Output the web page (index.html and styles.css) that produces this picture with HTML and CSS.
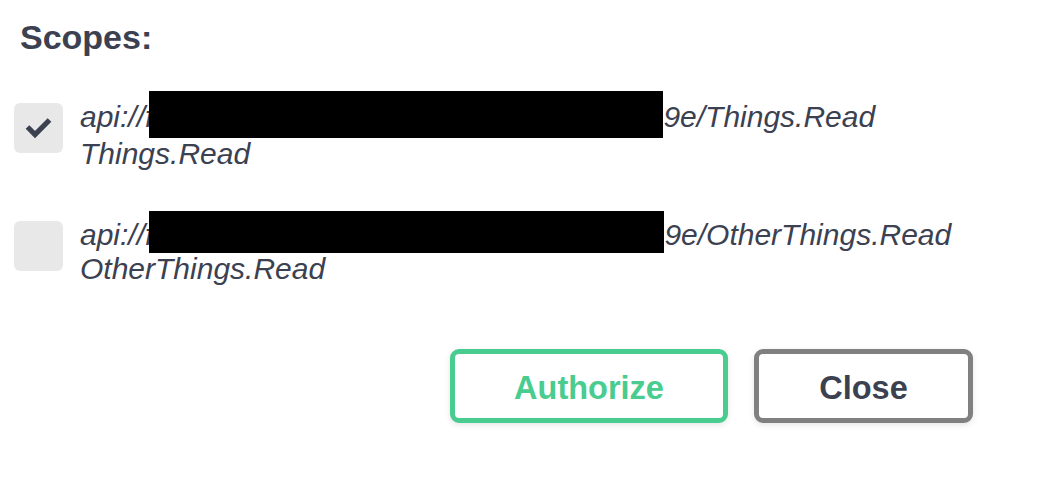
FILE: index.html
```html
<!DOCTYPE html>
<html>
<head>
<meta charset="utf-8">
<link rel="stylesheet" href="styles.css">
</head>
<body>
<div class="modal">
  <h2 class="title">Scopes:</h2>
  <div class="scopes">
    <div class="scope">
      <span class="checkbox">
        <svg class="check" viewBox="0 0 49 50" width="49" height="50"><polyline points="13.5,24 21,31.5 35.5,17" fill="none" stroke="#3b4151" stroke-width="5.2" stroke-linecap="butt" stroke-linejoin="miter"/></svg>
      </span>
      <div class="label">api://f<span class="redact r1"></span>9e/Things.Read<br>Things.Read</div>
    </div>
    <div class="scope">
      <span class="checkbox"></span>
      <div class="label">api://f<span class="redact r2"></span>9e/OtherThings.Read<br>OtherThings.Read</div>
    </div>
  </div>
  <div class="actions">
    <button class="btn authorize">Authorize</button>
    <button class="btn close">Close</button>
  </div>
</div>
</body>
</html>
```
FILE: styles.css
```css
html, body {
  margin: 0;
  padding: 0;
  background: #ffffff;
}
.modal {
  width: 1045px;
  height: 477px;
  box-sizing: border-box;
  padding: 17px 72px 0 14px;
  font-family: "Liberation Sans", Arial, sans-serif;
  color: #3b4151;
}
.title {
  margin: 0 0 0 6px;
  font-size: 34px;
  line-height: 40px;
  font-weight: bold;
}
.scopes {
  margin-top: 44px;
  display: flex;
  flex-direction: column;
  gap: 54px;
}
.scope {
  display: flex;
  align-items: flex-start;
}
.checkbox {
  flex: none;
  width: 49px;
  height: 50px;
  margin-top: 2px;
  margin-right: 17px;
  border-radius: 6px;
  background: #e8e8e8;
  display: block;
}
.check {
  display: block;
}
.label {
  font-style: italic;
  font-size: 30px;
  line-height: 32px;
  height: 64px;
  white-space: nowrap;
}
.redact {
  display: inline-block;
  background: #000;
  margin-left: -4px;
}
.r1 {
  width: 514px;
  height: 47px;
  vertical-align: -11px;
  margin-top: -12px;
}
.r2 {
  width: 515px;
  height: 42px;
  vertical-align: -8px;
  margin-top: -10px;
}
.actions {
  margin-top: 66px;
  display: flex;
  justify-content: flex-end;
  gap: 26px;
}
.btn {
  height: 74px;
  box-sizing: border-box;
  border-radius: 9px;
  border: 5px solid;
  background: #fff;
  font-family: "Liberation Sans", Arial, sans-serif;
  font-weight: bold;
  font-size: 32.5px;
  box-shadow: 0 2px 6px rgba(0, 0, 0, 0.1);
  padding: 4px 0 0 0;
  display: flex;
  align-items: center;
  justify-content: center;
}
.authorize {
  width: 278px;
  border-color: #49cc90;
  color: #49cc90;
}
.close {
  width: 219px;
  border-color: #808080;
  color: #3b4151;
}
```
